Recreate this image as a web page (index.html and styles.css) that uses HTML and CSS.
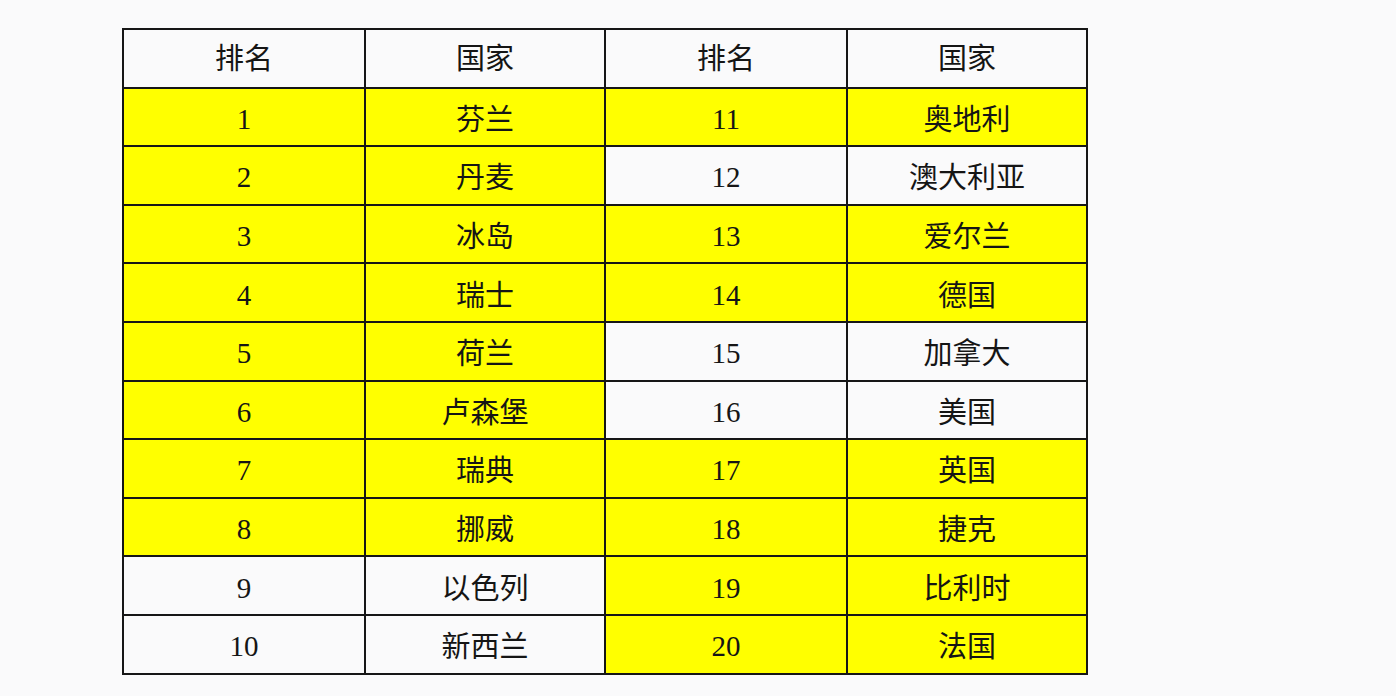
FILE: index.html
```html
<!DOCTYPE html>
<html lang="zh">
<head>
<meta charset="utf-8">
<link rel="stylesheet" href="styles.css">
</head>
<body>
<table class="rank">
<colgroup><col class="c1"><col class="c2"><col class="c3"><col class="c4"></colgroup>
<tr class="head"><td>排名</td><td>国家</td><td>排名</td><td>国家</td></tr>
<tr><td class="y num">1</td><td class="y">芬兰</td><td class="y num">11</td><td class="y">奥地利</td></tr>
<tr><td class="y num">2</td><td class="y">丹麦</td><td class="num">12</td><td>澳大利亚</td></tr>
<tr><td class="y num">3</td><td class="y">冰岛</td><td class="y num">13</td><td class="y">爱尔兰</td></tr>
<tr><td class="y num">4</td><td class="y">瑞士</td><td class="y num">14</td><td class="y">德国</td></tr>
<tr><td class="y num">5</td><td class="y">荷兰</td><td class="num">15</td><td>加拿大</td></tr>
<tr><td class="y num">6</td><td class="y">卢森堡</td><td class="num">16</td><td>美国</td></tr>
<tr><td class="y num">7</td><td class="y">瑞典</td><td class="y num">17</td><td class="y">英国</td></tr>
<tr><td class="y num">8</td><td class="y">挪威</td><td class="y num">18</td><td class="y">捷克</td></tr>
<tr><td class="num">9</td><td>以色列</td><td class="y num">19</td><td class="y">比利时</td></tr>
<tr><td class="num">10</td><td>新西兰</td><td class="y num">20</td><td class="y">法国</td></tr>
</table>
</body>
</html>
```
FILE: styles.css
```css
html, body {
  margin: 0;
  padding: 0;
  background: #fafafb;
}
body {
  padding: 28px 0 0 122px;
  font-family: "Noto Sans CJK SC", "Noto Sans", sans-serif;
  color: #151515;
}
.rank {
  border-collapse: collapse;
  table-layout: fixed;
  width: 966px;
}
.c1 { width: 242px; }
.c2 { width: 240px; }
.c3 { width: 242px; }
.c4 { width: 240px; }
.rank td {
  border: 2px solid #161616;
  height: 56.6px;
  padding: 0;
  text-align: center;
  vertical-align: middle;
  font-size: 29px;
  line-height: 30px;
  background: #fafafb;
}
.rank .head td {
  padding-bottom: 4px;
  height: 52.6px;
}
.rank td.y {
  background: #ffff00;
}
.rank td.num {
  font-family: "Liberation Serif", "DejaVu Serif", serif;
  font-size: 29px;
  padding-top: 4px;
  height: 52.6px;
}
```
